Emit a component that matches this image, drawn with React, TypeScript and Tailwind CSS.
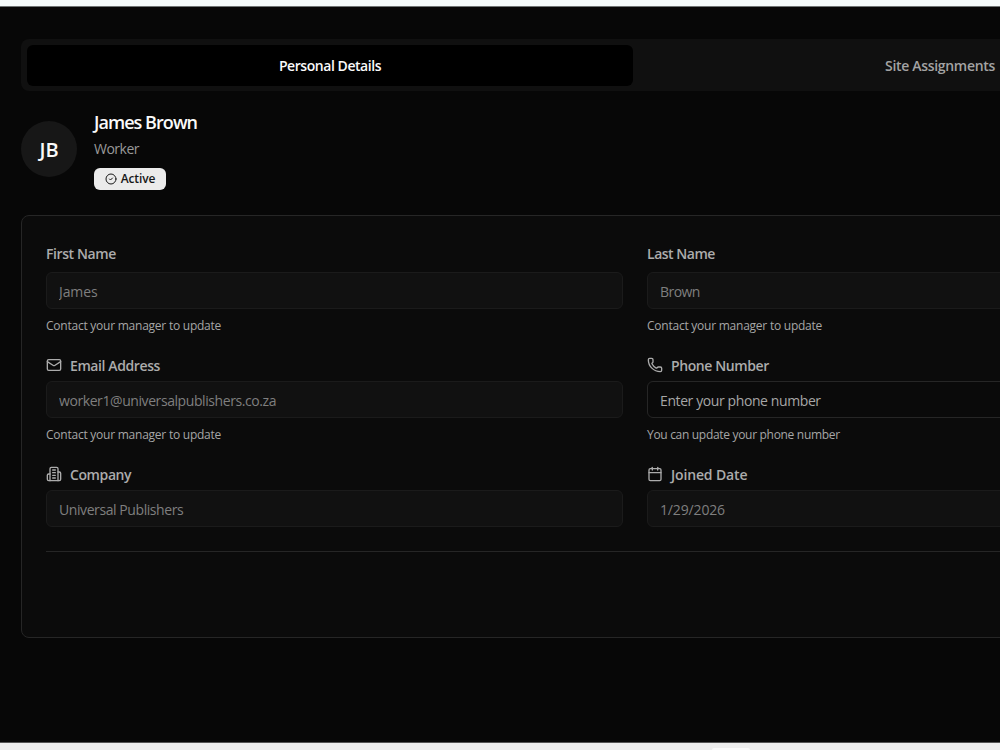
import type { ReactNode } from 'react'
import { Calendar, CircleCheck, Mail, Phone } from 'lucide-react'

type IconProps = {
    className?: string
}

function BuildingIcon({ className }: IconProps) {
    return (
        <svg
            viewBox="0 0 24 24"
            fill="none"
            stroke="currentColor"
            strokeWidth="2"
            strokeLinecap="round"
            strokeLinejoin="round"
            className={className}
        >
            <path d="M6 22V4a2 2 0 0 1 2-2h8a2 2 0 0 1 2 2v18Z" />
            <path d="M6 12H4a2 2 0 0 0-2 2v6a2 2 0 0 0 2 2h2" />
            <path d="M18 9h2a2 2 0 0 1 2 2v9a2 2 0 0 1-2 2h-2" />
            <path d="M10 6h4" />
            <path d="M10 10h4" />
            <path d="M10 14h4" />
            <path d="M10 18h4" />
        </svg>
    )
}

type FieldProps = {
    label: string
    labelClass: string
    value?: string
    valueClass: string
    placeholder?: string
    hint?: string
    hintClass?: string
    icon?: ReactNode
}

function Field({ label, labelClass, value, valueClass, placeholder, hint, hintClass = '', icon }: FieldProps) {
    const disabled = value !== undefined

    return (
        <div className="flex flex-col">
            <label className="flex h-[22px] items-center gap-2 text-sm font-semibold text-[#acacac]">
                {icon}
                <span className={labelClass}>{label}</span>
            </label>
            <input
                className={`h-[37px] w-full rounded-md border px-3 pt-0.5 text-sm outline-none placeholder:text-[#a6a6a6] ${valueClass} ${
                    icon ? 'mt-1' : 'mt-[7px]'
                } ${disabled ? 'border-[#1b1b1b] bg-[#111111] text-[#7f7f7f]' : 'border-[#262626] bg-[#0a0a0a] text-[#a6a6a6]'}`}
                defaultValue={value}
                placeholder={placeholder}
                disabled={disabled}
            />
            {hint && <p className={`mt-2 text-xs leading-[17px] text-[#a6a6a6] ${hintClass}`}>{hint}</p>}
        </div>
    )
}

function ProfileHeader() {
    return (
        <div className="mt-5 flex items-center gap-[17px]">
            <div className="mb-1 flex h-14 w-14 items-center justify-center rounded-full bg-[#171717] pt-0.5 text-xl font-semibold text-[#fafafa]">
                JB
            </div>
            <div>
                <h2 className="text-lg leading-[23px] font-semibold tracking-[-0.95px] text-[#fafafa]">James Brown</h2>
                <p className="mt-[5px] text-sm leading-5 tracking-[-0.5px] text-[#999999]">Worker</p>
                <span className="mt-[9px] flex h-[22px] w-[72px] items-center justify-center gap-1 rounded-md bg-[#ebebeb] text-xs font-semibold tracking-[-0.15px] text-[#171717]">
                    <CircleCheck className="h-3 w-3" />
                    Active
                </span>
            </div>
        </div>
    )
}

export default function App() {
    return (
        <div className="flex h-[750px] w-[1000px] flex-col overflow-hidden bg-[#070707] font-['Open_Sans',sans-serif]">
            <div className="h-[7px] shrink-0 border-b border-[#6f7474] bg-[#f5fbfb]" />

            <main className="ml-[21px] w-[1228px] flex-1 pt-8">
                <div className="grid h-[52px] grid-cols-2 gap-1 rounded-lg bg-[#101010] p-1.5 pb-[5px] text-sm font-semibold">
                    <button className="rounded-md bg-black pt-px tracking-[-0.44px] text-[#fafafa]">
                        Personal Details
                    </button>
                    <button className="rounded-md pt-px tracking-[-0.32px] text-[#a3a3a3]">Site Assignments</button>
                </div>

                <ProfileHeader />

                <section className="mt-[25px] h-[423px] rounded-lg border border-[#262626] bg-[#0b0b0b] px-6 pt-[27px]">
                    <div className="grid grid-cols-2 gap-x-6">
                        <div className="flex flex-col gap-[21px]">
                            <Field
                                label="First Name"
                                labelClass="tracking-[-0.4px]"
                                value="James"
                                valueClass="tracking-[-0.1px]"
                                hint="Contact your manager to update"
                                hintClass="tracking-[-0.24px]"
                            />
                            <Field
                                label="Email Address"
                                labelClass="tracking-[-0.4px]"
                                value="worker1@universalpublishers.co.za"
                                valueClass="tracking-[-0.42px]"
                                hint="Contact your manager to update"
                                hintClass="tracking-[-0.24px]"
                                icon={<Mail className="mb-0.5 h-4 w-4" />}
                            />
                            <Field
                                label="Company"
                                labelClass="tracking-[-0.4px]"
                                value="Universal Publishers"
                                valueClass="tracking-[-0.42px]"
                                icon={<BuildingIcon className="mb-0.5 h-4 w-4" />}
                            />
                        </div>
                        <div className="flex flex-col gap-[21px]">
                            <Field
                                label="Last Name"
                                labelClass="tracking-[-0.48px]"
                                value="Brown"
                                valueClass="tracking-[-0.55px]"
                                hint="Contact your manager to update"
                                hintClass="tracking-[-0.24px]"
                            />
                            <Field
                                label="Phone Number"
                                labelClass="tracking-[-0.4px]"
                                valueClass="tracking-[-0.4px]"
                                placeholder="Enter your phone number"
                                hint="You can update your phone number"
                                hintClass="tracking-[-0.31px]"
                                icon={<Phone className="mb-0.5 h-4 w-4" />}
                            />
                            <Field
                                label="Joined Date"
                                labelClass="tracking-[-0.15px]"
                                value="1/29/2026"
                                valueClass="tracking-[-0.15px]"
                                icon={<Calendar className="mb-0.5 h-4 w-4" />}
                            />
                        </div>
                    </div>
                    <hr className="mt-6 border-[#262626]" />
                </section>
            </main>

            <footer className="flex h-2 shrink-0 items-end border-t border-[#555555] bg-[#ededed]">
                <div className="ml-[712px] h-0.5 w-[38px] rounded-t-sm bg-[#fafafa]" />
            </footer>
        </div>
    )
}
